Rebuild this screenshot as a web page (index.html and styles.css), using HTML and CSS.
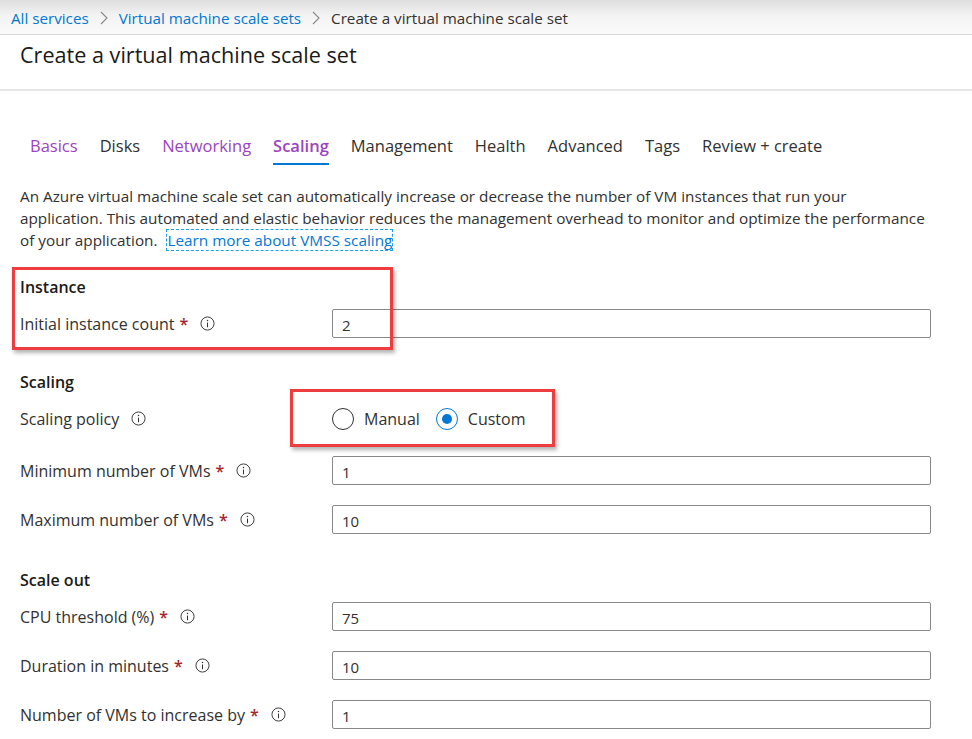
FILE: index.html
```html
<!DOCTYPE html>
<html lang="en">
<head>
<meta charset="utf-8">
<title>Create a virtual machine scale set</title>
<link rel="stylesheet" href="styles.css">
</head>
<body>
<nav class="breadcrumb">
  <a class="crumb" href="#">All services</a>
  <svg class="chev" viewBox="0 0 8 14" width="8" height="14"><path d="M1 1l6 6-6 6" fill="none" stroke="#8a8886" stroke-width="1.1"/></svg>
  <a class="crumb" href="#">Virtual machine scale sets</a>
  <svg class="chev" viewBox="0 0 8 14" width="8" height="14"><path d="M1 1l6 6-6 6" fill="none" stroke="#8a8886" stroke-width="1.1"/></svg>
  <span class="crumb current">Create a virtual machine scale set</span>
</nav>
<header class="page-header">
  <h1 class="title">Create a virtual machine scale set</h1>
</header>
<main class="content">
  <div class="tabs">
    <span class="tab visited">Basics</span>
    <span class="tab">Disks</span>
    <span class="tab visited">Networking</span>
    <span class="tab visited active">Scaling</span>
    <span class="tab">Management</span>
    <span class="tab">Health</span>
    <span class="tab">Advanced</span>
    <span class="tab">Tags</span>
    <span class="tab">Review + create</span>
  </div>
  <p class="desc">An Azure virtual machine scale set can automatically increase or decrease the number of VM instances that run your<br>application. This automated and elastic behavior reduces the management overhead to monitor and optimize the performance<br>of your application. <a class="learn" href="#">Learn more about VMSS scaling</a></p>

  <section class="group instance">
    <div class="highlight hl-instance"></div>
    <h2 class="section-title">Instance</h2>
    <div class="row">
      <label class="label">Initial instance count <span class="req">*</span><svg class="info" viewBox="0 0 16 16" width="15" height="15"><circle cx="8" cy="8" r="7" fill="none" stroke="#323130" stroke-width="1"/><path d="M8 7v5" stroke="#323130" stroke-width="1.1"/><circle cx="8" cy="4.8" r="0.8" fill="#323130"/></svg></label>
      <div class="field"><span class="input">2</span></div>
    </div>
  </section>

  <section class="group">
    <h2 class="section-title">Scaling</h2>
    <div class="row radio-row">
      <div class="highlight hl-policy"></div>
      <label class="label">Scaling policy<svg class="info" viewBox="0 0 16 16" width="15" height="15"><circle cx="8" cy="8" r="7" fill="none" stroke="#323130" stroke-width="1"/><path d="M8 7v5" stroke="#323130" stroke-width="1.1"/><circle cx="8" cy="4.8" r="0.8" fill="#323130"/></svg></label>
      <div class="field radios">
        <span class="radio"><span class="circle"></span>Manual</span>
        <span class="radio checked"><span class="circle"></span>Custom</span>
      </div>
    </div>
    <div class="row">
      <label class="label">Minimum number of VMs <span class="req">*</span><svg class="info" viewBox="0 0 16 16" width="15" height="15"><circle cx="8" cy="8" r="7" fill="none" stroke="#323130" stroke-width="1"/><path d="M8 7v5" stroke="#323130" stroke-width="1.1"/><circle cx="8" cy="4.8" r="0.8" fill="#323130"/></svg></label>
      <div class="field"><span class="input">1</span></div>
    </div>
    <div class="row">
      <label class="label">Maximum number of VMs <span class="req">*</span><svg class="info" viewBox="0 0 16 16" width="15" height="15"><circle cx="8" cy="8" r="7" fill="none" stroke="#323130" stroke-width="1"/><path d="M8 7v5" stroke="#323130" stroke-width="1.1"/><circle cx="8" cy="4.8" r="0.8" fill="#323130"/></svg></label>
      <div class="field"><span class="input">10</span></div>
    </div>
  </section>

  <section class="group scale-out">
    <h2 class="section-title">Scale out</h2>
    <div class="row">
      <label class="label">CPU threshold (%) <span class="req">*</span><svg class="info" viewBox="0 0 16 16" width="15" height="15"><circle cx="8" cy="8" r="7" fill="none" stroke="#323130" stroke-width="1"/><path d="M8 7v5" stroke="#323130" stroke-width="1.1"/><circle cx="8" cy="4.8" r="0.8" fill="#323130"/></svg></label>
      <div class="field"><span class="input">75</span></div>
    </div>
    <div class="row">
      <label class="label">Duration in minutes <span class="req">*</span><svg class="info" viewBox="0 0 16 16" width="15" height="15"><circle cx="8" cy="8" r="7" fill="none" stroke="#323130" stroke-width="1"/><path d="M8 7v5" stroke="#323130" stroke-width="1.1"/><circle cx="8" cy="4.8" r="0.8" fill="#323130"/></svg></label>
      <div class="field"><span class="input">10</span></div>
    </div>
    <div class="row">
      <label class="label">Number of VMs to increase by <span class="req">*</span><svg class="info" viewBox="0 0 16 16" width="15" height="15"><circle cx="8" cy="8" r="7" fill="none" stroke="#323130" stroke-width="1"/><path d="M8 7v5" stroke="#323130" stroke-width="1.1"/><circle cx="8" cy="4.8" r="0.8" fill="#323130"/></svg></label>
      <div class="field"><span class="input">1</span></div>
    </div>
  </section>
</main>
</body>
</html>
```
FILE: styles.css
```css
* { box-sizing: border-box; }
html, body { margin: 0; padding: 0; background: #fff; }
body {
  font-family: "Open Sans", "Noto Sans", sans-serif;
  color: #323130;
  overflow: hidden;
  height: 739px;
}
.breadcrumb {
  height: 35px;
  display: flex;
  align-items: center;
  gap: 11px;
  padding: 1px 0 0 11px;
  background: linear-gradient(#dedede, #f3f3f3 45%, #fafafa);
  border-bottom: 1px solid #d9d9d9;
  font-size: 15.2px;
}
.crumb { color: #0078d4; text-decoration: none; white-space: nowrap; }
.crumb.current { color: #323130; }
.chev { flex: none; }
.page-header {
  height: 56px;
  padding: 5px 0 0 20px;
  border-bottom: 2px solid #e6e6e6;
}
.title {
  margin: 0;
  font-size: 21.6px;
  font-weight: 400;
  color: #1b1a19;
  line-height: 30px;
}
.content { padding: 0 41px 0 20px; position: relative; }
.tabs {
  display: flex;
  gap: 22px;
  padding: 42px 0 0 10px;
  font-size: 16.5px;
  height: 94px;
}
.tab {
  height: 32px;
  line-height: 26px;
  color: #323130;
  white-space: nowrap;
}
.tab.visited { color: #9b44c0; }
.tab.active {
  font-weight: 600;
  border-bottom: 2px solid #0078d4;
}
.desc {
  margin: 0;
  font-size: 15.3px;
  line-height: 22px;
  color: #323130;
}
.learn {
  color: #0078d4;
  text-decoration: none;
  outline: 1px dashed #1aa0e6;
  outline-offset: 0;
  margin-left: 6px;
}
.group { position: relative; margin-top: 33px; }
.group.instance { margin-top: 25px; }
.scale-out { margin-top: 35px; }
.section-title {
  margin: 0 0 11px;
  font-size: 16px;
  font-weight: 600;
  line-height: 22px;
  color: #1b1a19;
}
.row {
  display: grid;
  grid-template-columns: 312px 1fr;
  align-items: center;
  height: 29px;
  position: relative;
}
.row + .row { margin-top: 20px; }
.radio-row { margin-top: 10px; }
.radio-row + .row { margin-top: 23px; }
.label {
  font-size: 16px;
  display: flex;
  align-items: center;
  white-space: nowrap;
}
.req { color: #a4262c; font-weight: 600; margin-left: 5px; }
.info { margin-left: 12px; flex: none; }
.input {
  display: flex;
  align-items: center;
  height: 29px;
  border: 1px solid #8a8886;
  border-radius: 2px;
  padding: 2px 0 0 9px;
  font-size: 15px;
  color: #323130;
}
.radios { display: flex; gap: 16px; align-items: center; }
.radio { display: flex; align-items: center; gap: 10px; font-size: 16px; }
.circle {
  width: 22px; height: 22px;
  border: 1px solid #323130;
  border-radius: 50%;
  position: relative;
}
.checked .circle { border-color: #0078d4; }
.checked .circle::after {
  content: "";
  position: absolute;
  left: 5px; top: 5px;
  width: 10px; height: 10px;
  border-radius: 50%;
  background: #0078d4;
}
.highlight {
  position: absolute;
  border: 3px solid #ee3d3f;
  box-shadow: 2px 3px 4px rgba(0,0,0,0.3);
  pointer-events: none;
  z-index: 2;
}
.hl-instance { left: -8px; top: -9px; width: 381px; height: 83px; }
.hl-policy { left: 270px; top: -15px; width: 265px; height: 58px; }
```
